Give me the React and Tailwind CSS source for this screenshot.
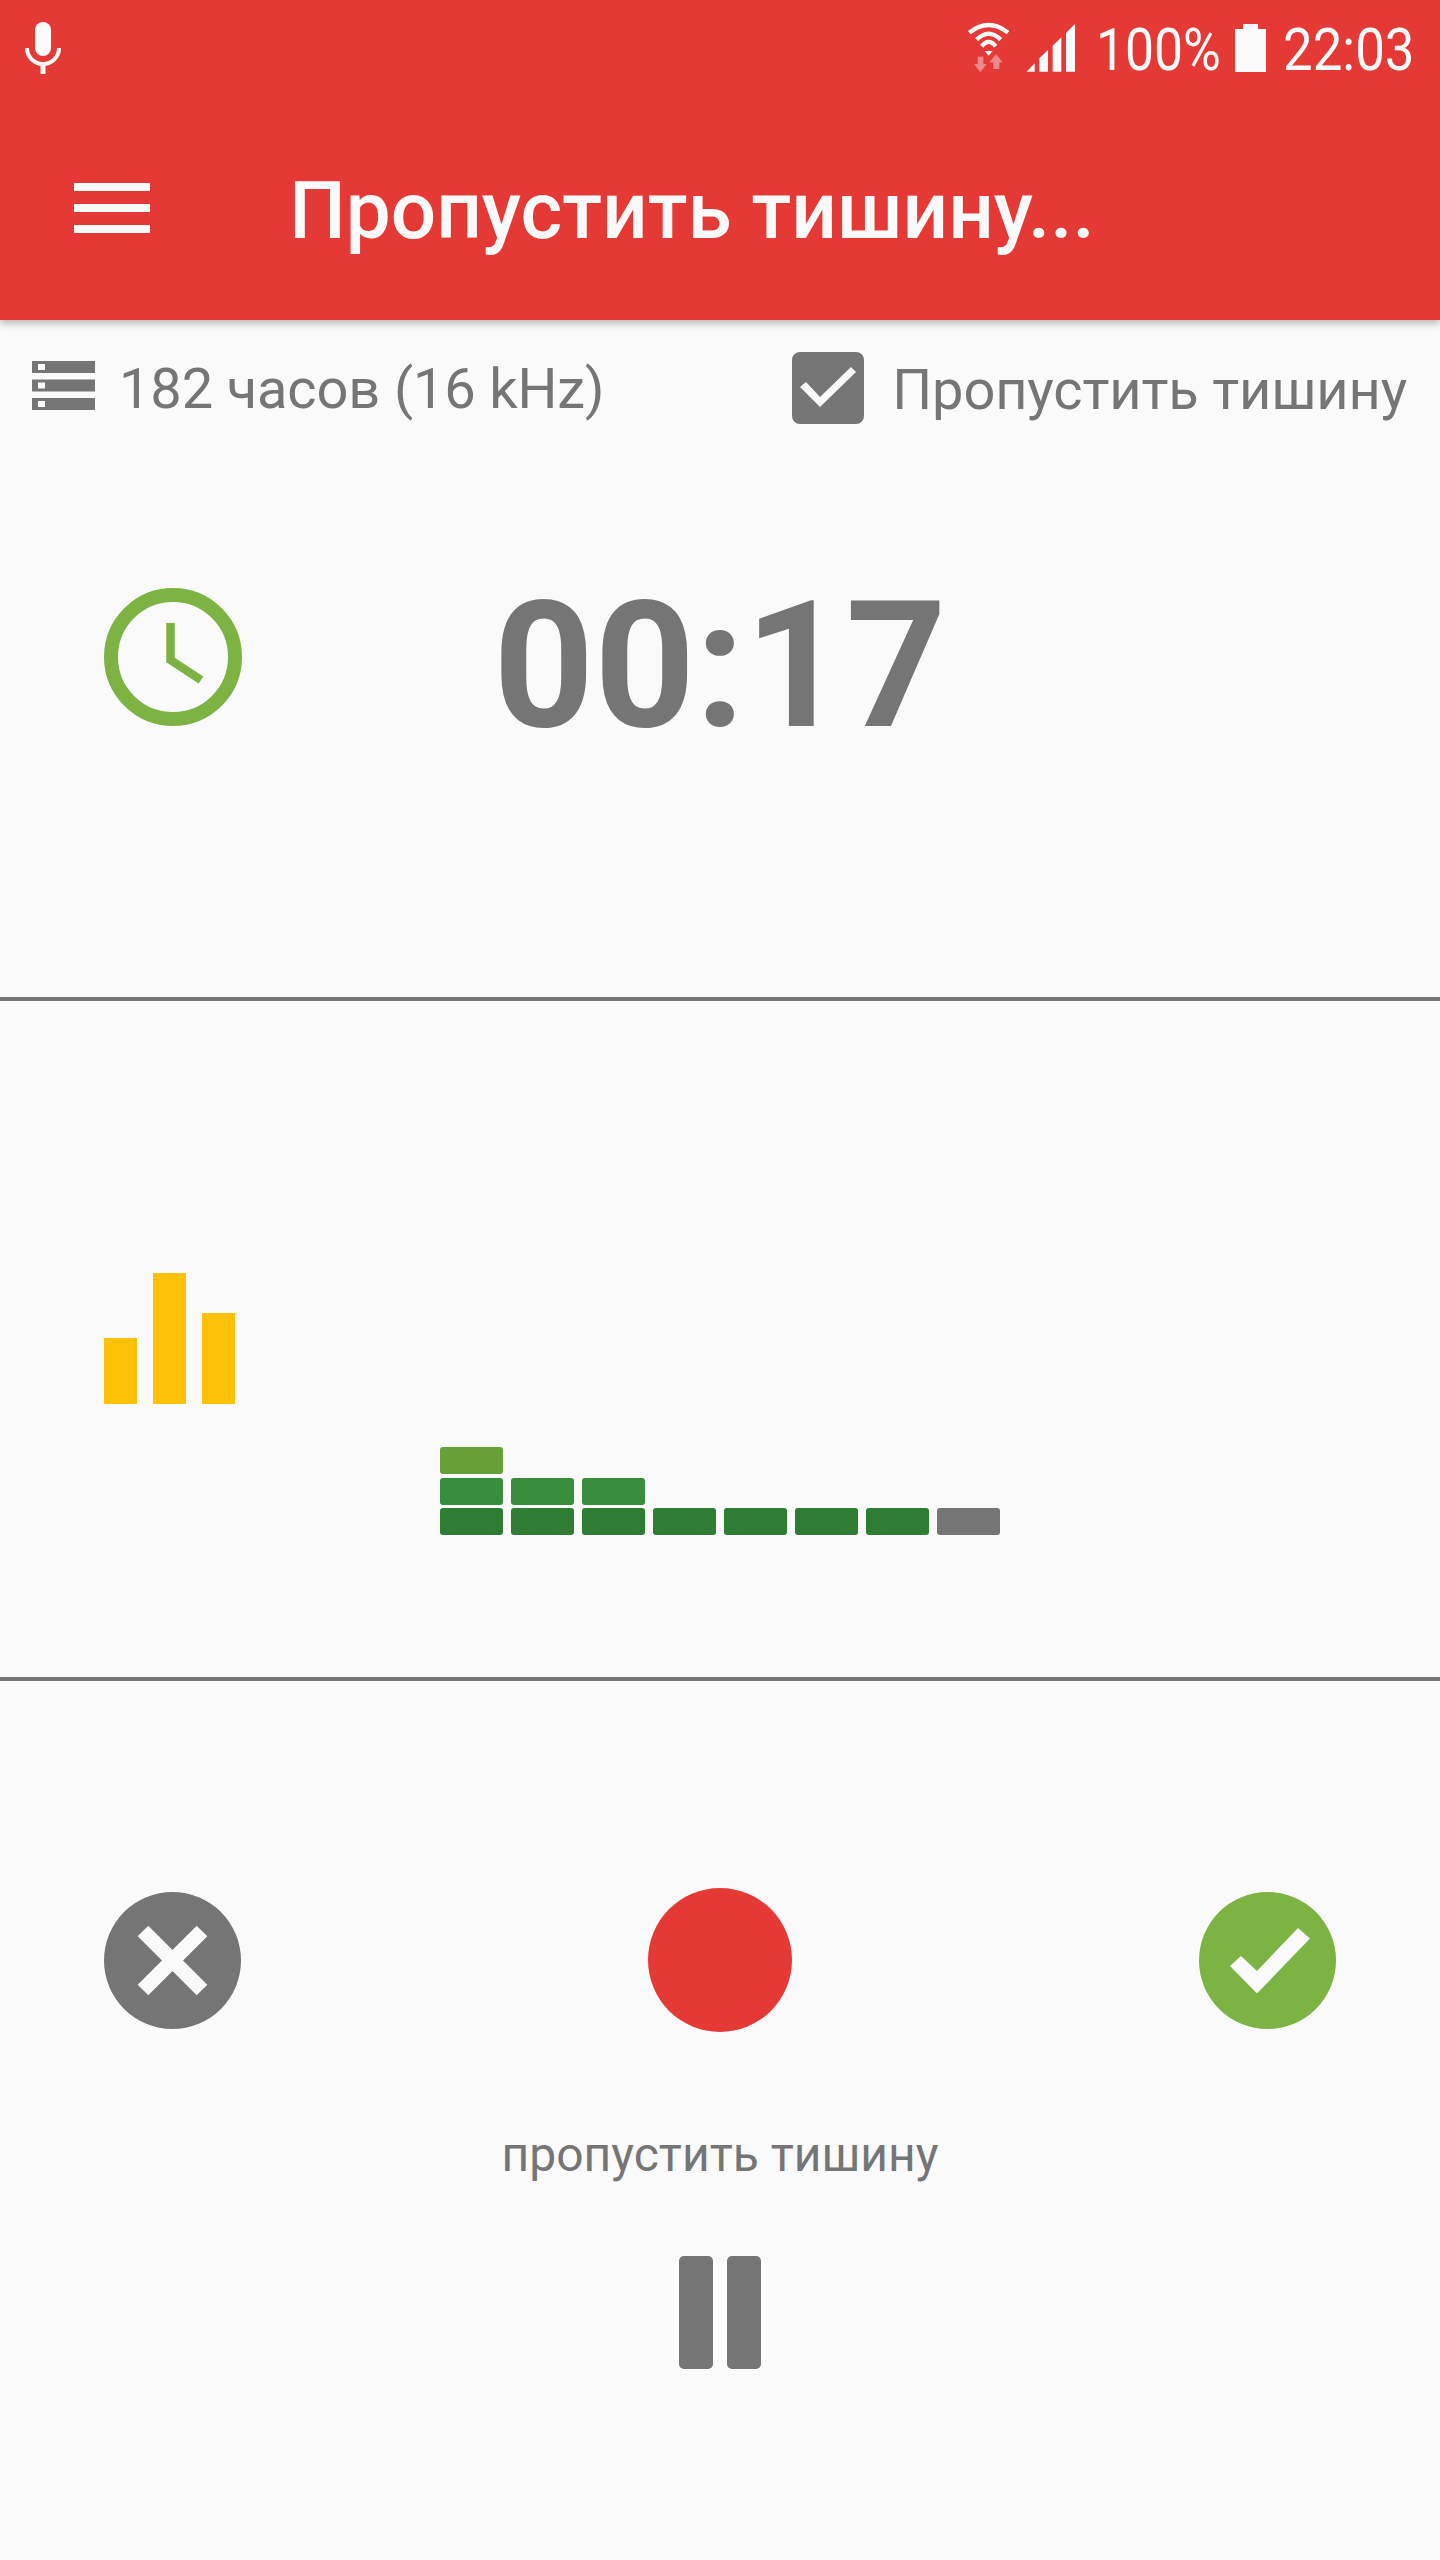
const roboto = "font-['Roboto',sans-serif]";

function Mic() {
  return (
    <svg width="36" height="52" viewBox="0 0 36 52" className="block">
      <rect x="10" y="0" width="16" height="34" rx="8" fill="#fafafa" />
      <path d="M2 26 a16 16 0 0 0 32 0" fill="none" stroke="#fafafa" strokeWidth="4" />
      <rect x="15.5" y="41" width="5" height="11" fill="#fafafa" />
    </svg>
  );
}

function Network() {
  return (
    <svg width="120" height="80" viewBox="0 0 360 240" className="block">
      <g fill="none" stroke="#fafafa" strokeWidth="13">
        <path d="M28 98 Q86 52 144 98" />
        <path d="M50 119 Q86 84 122 119" />
        <path d="M65 139 Q86 112 107 139" />
      </g>
      <polygon points="74,153 98,153 86,167" fill="#fafafa" />
      <g fill="#fafafa" opacity="0.42">
        <rect x="53" y="170" width="17" height="24" />
        <polygon points="42,192 80,192 61,217" />
        <rect x="100" y="183" width="18" height="24" />
        <polygon points="88,187 128,187 108,163" />
      </g>
      <g fill="#fafafa">
        <polygon points="200,215 224,190 224,215" />
        <polygon points="238,215 238,175 264,150 264,215" />
        <polygon points="278,215 278,137 304,112 304,215" />
        <polygon points="318,215 318,99 345,72 345,215" />
      </g>
    </svg>
  );
}

function Battery() {
  return (
    <svg width="31" height="48" viewBox="0 0 31 48" className="block">
      <path d="M8 0h15v5h8v43H0V5h8z" fill="#fafafa" />
    </svg>
  );
}

function Hamburger() {
  return (
    <svg width="76" height="50" viewBox="0 0 76 50" className="block">
      <rect x="0" y="0" width="76" height="8" fill="#fafafa" />
      <rect x="0" y="21" width="76" height="8" fill="#fafafa" />
      <rect x="0" y="42" width="76" height="8" fill="#fafafa" />
    </svg>
  );
}

function Storage() {
  return (
    <svg width="63" height="49" viewBox="0 0 63 49" className="block">
      <g fill="#757575">
        <rect y="0" width="63" height="12" />
        <rect y="18.5" width="63" height="12" />
        <rect y="37" width="63" height="12" />
      </g>
      <g fill="#fafafa">
        <rect x="6" y="3" width="7" height="6" />
        <rect x="6" y="21.5" width="7" height="6" />
        <rect x="6" y="40" width="7" height="6" />
      </g>
    </svg>
  );
}

function Checkbox() {
  return (
    <svg width="72" height="72" viewBox="0 0 72 72" className="block">
      <rect width="72" height="72" rx="8" fill="#757575" />
      <polygon points="8,35 14,30 28,45 59,15 64,20 28,55" fill="#fafafa" />
    </svg>
  );
}

function Clock() {
  return (
    <svg width="138" height="138" viewBox="0 0 138 138" className="block">
      <circle cx="69" cy="69" r="62" fill="none" stroke="#7cb342" strokeWidth="14" />
      <path d="M66.5 35 V72 L97 92" fill="none" stroke="#7cb342" strokeWidth="8.5" />
    </svg>
  );
}

function Bars() {
  return (
    <svg width="131" height="131" viewBox="0 0 131 131" className="block">
      <rect x="0" y="65" width="33" height="66" fill="#ffc107" />
      <rect x="49" y="0" width="33" height="131" fill="#ffc107" />
      <rect x="98" y="40" width="33" height="91" fill="#ffc107" />
    </svg>
  );
}

function Cancel() {
  return (
    <svg width="137" height="137" viewBox="0 0 137 137" className="block">
      <circle cx="68.5" cy="68.5" r="68.5" fill="#757575" />
      <path d="M39 39 L98 98 M98 39 L39 98" fill="none" stroke="#fafafa" strokeWidth="15" />
    </svg>
  );
}

function Accept() {
  return (
    <svg width="137" height="137" viewBox="0 0 137 137" className="block">
      <circle cx="68.5" cy="68.5" r="68.5" fill="#7cb342" />
      <polygon points="31,74 42,64 58,79 99,36 111,46.5 58,101.5" fill="#fafafa" />
    </svg>
  );
}

function Pause() {
  return (
    <svg width="82" height="113" viewBox="0 0 82 113" className="block">
      <rect x="0" y="0" width="34" height="113" rx="5" fill="#757575" />
      <rect x="48" y="0" width="34" height="113" rx="5" fill="#757575" />
    </svg>
  );
}

const meter = [
  ["bg-[#2e7d32]", "bg-[#388e3c]", "bg-[#689f38]"],
  ["bg-[#2e7d32]", "bg-[#388e3c]"],
  ["bg-[#2e7d32]", "bg-[#388e3c]"],
  ["bg-[#2e7d32]"],
  ["bg-[#2e7d32]"],
  ["bg-[#2e7d32]"],
  ["bg-[#2e7d32]"],
  ["bg-[#757575]"],
];

function Meter() {
  return (
    <div className="flex items-end justify-center gap-2">
      {meter.map((col, i) => (
        <div key={i} className="flex w-[63px] flex-col-reverse gap-[3.5px]">
          {col.map((c, j) => (
            <div key={j} className={`h-[27px] rounded-[3px] ${c}`} />
          ))}
        </div>
      ))}
    </div>
  );
}

export default function App() {
  return (
    <div className={`flex h-[2560px] w-[1440px] flex-col overflow-hidden bg-[#fafafa] text-[#757575] ${roboto}`}>
      <header className="relative z-10 h-[320px] bg-[#e53935] text-[#fafafa] shadow-[0_3px_8px_rgba(0,0,0,0.3)]">
        <div className="flex h-[96px] items-start">
          <div className="ml-[25px] mt-[22px]"><Mic /></div>
          <div className="ml-auto"><Network /></div>
          <div className="ml-[16px] mt-[14px] w-[124px] origin-left scale-x-[0.86] whitespace-nowrap text-[60px] leading-[72px] font-normal">100%</div>
          <div className="ml-[15px] mt-[24px]"><Battery /></div>
          <div className="ml-[17px] mr-[26px] mt-[14px] w-[131px] origin-left scale-x-[0.88] whitespace-nowrap text-[60px] leading-[72px] font-normal">22:03</div>
        </div>
        <div className="flex h-[224px] items-center pl-[74px]">
          <Hamburger />
          <h1 className="ml-[139px] mt-[5px] whitespace-nowrap text-[80px] leading-none font-medium">Пропустить тишину...</h1>
        </div>
      </header>

      <section className="h-[677px] shrink-0">
        <div className="flex h-[136px] items-center pl-[32px] pr-[33px] text-[56px] leading-none tracking-[-0.15px]">
          <div className="mb-[5px]"><Storage /></div>
          <span className="ml-[24px] mt-[2px] whitespace-nowrap">182 часов (16 kHz)</span>
          <div className="ml-auto"><Checkbox /></div>
          <span className="ml-[28px] mt-[3px] whitespace-nowrap">Пропустить тишину</span>
        </div>
        <div className="grid grid-cols-[1fr_auto_1fr] items-start pt-[132px]">
          <div className="pl-[104px]"><Clock /></div>
          <div className="-mt-[10px] text-[176px] leading-none font-[750]">00:17</div>
        </div>
      </section>
      <div className="h-[4px] shrink-0 bg-[#757575]" />

      <section className="h-[676px] shrink-0 pt-[272px]">
        <div className="pl-[104px]"><Bars /></div>
        <div className="mt-[43px]"><Meter /></div>
      </section>
      <div className="h-[4px] shrink-0 bg-[#757575]" />

      <section className="flex-1 pt-[207px]">
        <div className="flex h-[144px] items-center justify-between px-[104px]">
          <Cancel />
          <div className="h-[144px] w-[144px] rounded-full bg-[#e53935]" />
          <Accept />
        </div>
        <div className="mt-[95px] text-center text-[48px] leading-[56px]">пропустить тишину</div>
        <div className="mt-[73px] flex justify-center"><Pause /></div>
      </section>
    </div>
  );
}
